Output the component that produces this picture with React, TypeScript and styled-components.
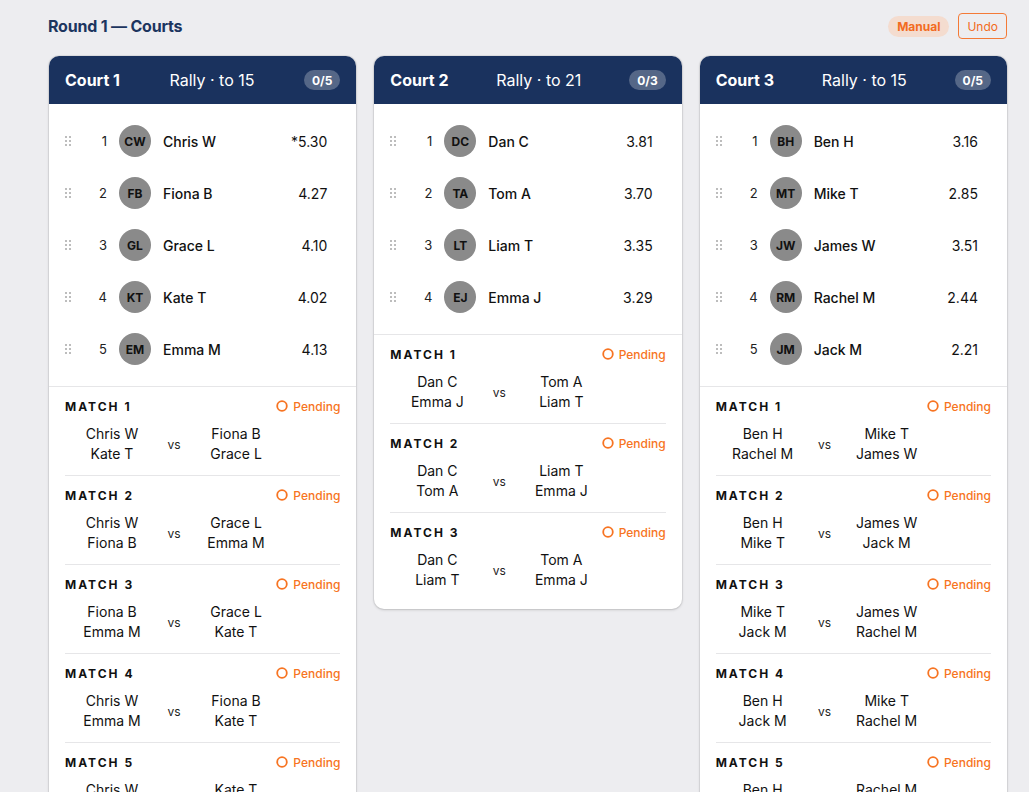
import React from "react";
import styled, { createGlobalStyle } from "styled-components";

const GlobalStyle = createGlobalStyle`
  * { box-sizing: border-box; }
  html, body {
    margin: 0;
    padding: 0;
    background: #ededf0;
    font-family: Inter, "Noto Sans", "Liberation Sans", sans-serif;
    color: #111;
    -webkit-font-smoothing: antialiased;
  }
`;

type Player = { initials: string; name: string; rating: string };
type Match = { a: [string, string]; b: [string, string] };
type Court = {
  name: string;
  format: string;
  players: Player[];
  matches: Match[];
};

const courts: Court[] = [
  {
    name: "Court 1",
    format: "Rally · to 15",
    players: [
      { initials: "CW", name: "Chris W", rating: "*5.30" },
      { initials: "FB", name: "Fiona B", rating: "4.27" },
      { initials: "GL", name: "Grace L", rating: "4.10" },
      { initials: "KT", name: "Kate T", rating: "4.02" },
      { initials: "EM", name: "Emma M", rating: "4.13" },
    ],
    matches: [
      { a: ["Chris W", "Kate T"], b: ["Fiona B", "Grace L"] },
      { a: ["Chris W", "Fiona B"], b: ["Grace L", "Emma M"] },
      { a: ["Fiona B", "Emma M"], b: ["Grace L", "Kate T"] },
      { a: ["Chris W", "Emma M"], b: ["Fiona B", "Kate T"] },
      { a: ["Chris W", "Grace L"], b: ["Kate T", "Emma M"] },
    ],
  },
  {
    name: "Court 2",
    format: "Rally · to 21",
    players: [
      { initials: "DC", name: "Dan C", rating: "3.81" },
      { initials: "TA", name: "Tom A", rating: "3.70" },
      { initials: "LT", name: "Liam T", rating: "3.35" },
      { initials: "EJ", name: "Emma J", rating: "3.29" },
    ],
    matches: [
      { a: ["Dan C", "Emma J"], b: ["Tom A", "Liam T"] },
      { a: ["Dan C", "Tom A"], b: ["Liam T", "Emma J"] },
      { a: ["Dan C", "Liam T"], b: ["Tom A", "Emma J"] },
    ],
  },
  {
    name: "Court 3",
    format: "Rally · to 15",
    players: [
      { initials: "BH", name: "Ben H", rating: "3.16" },
      { initials: "MT", name: "Mike T", rating: "2.85" },
      { initials: "JW", name: "James W", rating: "3.51" },
      { initials: "RM", name: "Rachel M", rating: "2.44" },
      { initials: "JM", name: "Jack M", rating: "2.21" },
    ],
    matches: [
      { a: ["Ben H", "Rachel M"], b: ["Mike T", "James W"] },
      { a: ["Ben H", "Mike T"], b: ["James W", "Jack M"] },
      { a: ["Mike T", "Jack M"], b: ["James W", "Rachel M"] },
      { a: ["Ben H", "Jack M"], b: ["Mike T", "Rachel M"] },
      { a: ["Ben H", "James W"], b: ["Rachel M", "Jack M"] },
    ],
  },
];

const Page = styled.div`
  padding: 13px 22px 0 49px;
`;

const TopBar = styled.div`
  display: flex;
  align-items: center;
  justify-content: space-between;
  height: 26px;
  margin-bottom: 17px;
`;

const Title = styled.h1`
  margin: 0 0 0 -1px;
  font-size: 16px;
  font-weight: 700;
  color: #1c355f;
  letter-spacing: -0.2px;
`;

const Actions = styled.div`
  display: flex;
  align-items: center;
  gap: 9px;
`;

const ModePill = styled.span`
  display: inline-flex;
  align-items: center;
  height: 21px;
  padding: 0 9px;
  border-radius: 11px;
  background: #f4dccf;
  color: #f26b21;
  font-size: 12px;
  font-weight: 700;
`;

const UndoButton = styled.button`
  height: 26px;
  padding: 0 8px;
  border: 1px solid #f47a36;
  border-radius: 4px;
  background: transparent;
  color: #f26b21;
  font-family: inherit;
  font-size: 12px;
  cursor: pointer;
`;

const Grid = styled.div`
  display: grid;
  grid-template-columns: repeat(3, 1fr);
  gap: 18px;
  align-items: start;
`;

const Card = styled.section`
  background: #fff;
  border-radius: 10px;
  overflow: hidden;
  box-shadow: 0 1px 3px rgba(0, 0, 0, 0.16), 0 0 0 1px rgba(0, 0, 0, 0.05);
`;

const CardHeader = styled.header`
  display: flex;
  align-items: center;
  justify-content: space-between;
  height: 48px;
  padding: 0 16px;
  background: #1a325e;
  color: #fff;
`;

const CourtName = styled.span`
  font-size: 16px;
  font-weight: 700;
`;

const Format = styled.span`
  font-size: 16px;
  font-weight: 400;
`;

const CountBadge = styled.span`
  display: inline-flex;
  align-items: center;
  height: 20px;
  padding: 0 8px;
  border-radius: 10px;
  background: rgba(255, 255, 255, 0.26);
  font-size: 12px;
  font-weight: 700;
`;

const Roster = styled.div`
  padding: 11px 0;
  border-bottom: 1px solid #e6e6e8;
`;

const PlayerRow = styled.div`
  display: flex;
  align-items: center;
  height: 52px;
  padding: 0 29px 0 16px;
`;

const Handle = styled.svg`
  flex: none;
  width: 6px;
  height: 10px;
`;

const Seed = styled.span`
  width: 24px;
  margin: 0 12px;
  text-align: right;
  font-size: 13px;
  color: #222;
`;

const Avatar = styled.span`
  flex: none;
  display: inline-flex;
  align-items: center;
  justify-content: center;
  width: 32px;
  height: 32px;
  border-radius: 50%;
  background: #8a8a8a;
  color: #111;
  font-size: 12px;
  font-weight: 700;
`;

const PlayerName = styled.span`
  flex: 1;
  margin-left: 12px;
  font-size: 14px;
  font-weight: 500;
`;

const Rating = styled.span`
  font-size: 14px;
  color: #111;
`;

const MatchList = styled.div`
  padding: 0 16px 8px;
`;

const MatchBlock = styled.div`
  padding: 11px 0 11px;
  & + & {
    border-top: 1px solid #e6e6e8;
  }
`;

const MatchHead = styled.div`
  display: flex;
  align-items: center;
  justify-content: space-between;
  height: 16px;
  margin-bottom: 10px;
`;

const MatchLabel = styled.span`
  font-size: 12px;
  font-weight: 700;
  letter-spacing: 2px;
  color: #111;
`;

const Status = styled.span`
  display: inline-flex;
  align-items: center;
  gap: 5px;
  font-size: 12px;
  font-weight: 500;
  color: #f77422;
`;

const Teams = styled.div`
  display: grid;
  grid-template-columns: 94px 30px 94px;
  align-items: center;
`;

const Team = styled.div`
  display: flex;
  flex-direction: column;
  align-items: center;
  font-size: 14px;
  line-height: 20px;
  color: #111;
`;

const Versus = styled.span`
  text-align: center;
  font-size: 12px;
  color: #222;
`;

const DragDots = () => (
  <Handle viewBox="0 0 6 10" aria-hidden="true">
    {[0, 4].map((x) =>
      [0, 4, 8].map((y) => (
        <rect key={`${x}-${y}`} x={x} y={y} width="2" height="2" fill="#bdbdbd" />
      ))
    )}
  </Handle>
);

const PendingIcon = () => (
  <svg width="12" height="12" viewBox="0 0 12 12" aria-hidden="true">
    <circle cx="6" cy="6" r="4.8" fill="none" stroke="#f77422" strokeWidth="1.8" />
  </svg>
);

const CourtCard = ({ court }: { court: Court }) => (
  <Card>
    <CardHeader>
      <CourtName>{court.name}</CourtName>
      <Format>{court.format}</Format>
      <CountBadge>0/{court.matches.length}</CountBadge>
    </CardHeader>
    <Roster>
      {court.players.map((p, i) => (
        <PlayerRow key={p.initials}>
          <DragDots />
          <Seed>{i + 1}</Seed>
          <Avatar>{p.initials}</Avatar>
          <PlayerName>{p.name}</PlayerName>
          <Rating>{p.rating}</Rating>
        </PlayerRow>
      ))}
    </Roster>
    <MatchList>
      {court.matches.map((m, i) => (
        <MatchBlock key={i}>
          <MatchHead>
            <MatchLabel>MATCH {i + 1}</MatchLabel>
            <Status>
              <PendingIcon />
              Pending
            </Status>
          </MatchHead>
          <Teams>
            <Team>
              <span>{m.a[0]}</span>
              <span>{m.a[1]}</span>
            </Team>
            <Versus>vs</Versus>
            <Team>
              <span>{m.b[0]}</span>
              <span>{m.b[1]}</span>
            </Team>
          </Teams>
        </MatchBlock>
      ))}
    </MatchList>
  </Card>
);

export default function App() {
  return (
    <>
      <GlobalStyle />
      <Page>
        <TopBar>
          <Title>Round 1 — Courts</Title>
          <Actions>
            <ModePill>Manual</ModePill>
            <UndoButton>Undo</UndoButton>
          </Actions>
        </TopBar>
        <Grid>
          {courts.map((c) => (
            <CourtCard key={c.name} court={c} />
          ))}
        </Grid>
      </Page>
    </>
  );
}
